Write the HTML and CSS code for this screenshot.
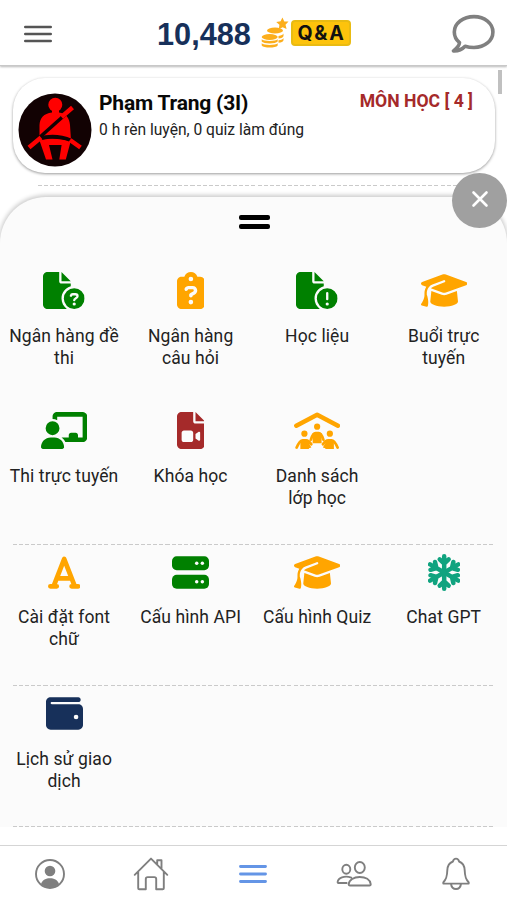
FILE: index.html
```html
<!DOCTYPE html>
<html lang="vi">
<head>
<meta charset="utf-8">
<title>Menu</title>
<link rel="stylesheet" href="styles.css">
</head>
<body>
<svg class="defs" aria-hidden="true">
  <symbol id="file-circle" viewBox="0 0 576 512"><path d="M0 64C0 28.700 28.700 0 64 0H224V128c0 17.700 14.300 32 32 32H384v38.600C310.100 219.500 256 287.400 256 368c0 59.100 29.100 111.300 73.700 143.300c-3.200.5-6.400.7-9.700.7H64c-35.300 0-64-28.700-64-64V64zM384 128H256V0L384 128zM432 224a144 144 0 1 1 0 288 144 144 0 1 1 0-288z"/></symbol>
  <symbol id="cap" viewBox="0 0 640 512"><path d="M320 32c-8.100 0-16.100 1.400-23.700 4.100L15.800 137.400C6.300 140.900 0 149.900 0 160s6.300 19.100 15.800 22.600l57.900 20.900C57.300 229.300 48 259.800 48 291.900v28.100c0 28.400-10.800 57.700-22.300 80.800c-6.500 13-13.900 25.800-22.500 37.600C0 442.700-.9 448.300.9 453.400s6 8.900 11.200 10.200l64 16c4.200 1.100 8.700.3 12.400-2s6.300-6.100 7.100-10.400c8.600-42.800 4.300-81.200-2.100-108.700C90.300 344.300 86 329.800 80 316.500V291.900c0-30.200 10.200-58.700 27.900-81.500c12.900-15.500 29.600-28 49.200-35.700l157-61.700c8.200-3.200 17.500.8 20.700 9s-.8 17.500-9 20.700l-157 61.700c-12.400 4.900-23.300 12.400-32.200 21.600l159.600 57.600c7.600 2.700 15.600 4.100 23.700 4.100s16.100-1.400 23.700-4.100L624.200 182.600c9.500-3.400 15.800-12.500 15.800-22.600s-6.300-19.100-15.800-22.600L343.700 36.100C336.100 33.400 328.100 32 320 32zM128 408c0 35.300 86 72 192 72s192-36.700 192-72L496.700 262.600 354.500 314c-11.100 4-22.800 6-34.500 6s-23.500-2-34.500-6L143.300 262.600 128 408z"/></symbol>
</svg>

<header class="topbar">
  <svg class="burger" viewBox="0 0 28 18"><path d="M1.200 2h25.600M1.200 9h25.600M1.200 16h25.600"/></svg>
  <div class="score">
    <span class="points">10,488</span>
    <svg class="coins" viewBox="0 0 28 32">
      <path d="M21.400.5l1.900 3.900 4.200.2-3 3.100 1.100 4.200-4-1.700-3.800 2.100.6-4.500-3.200-2.900 4.400-.7z"/>
      <ellipse cx="14" cy="13.500" rx="8" ry="3"/>
      <path d="M17.500 19c3-.3 4.700-1.200 5-2.400v2.300c-.4 1.400-2 2.200-5 2.500zM17.500 23.300c3-.3 4.700-1.200 5-2.400v2.300c-.4 1.400-2 2.200-5 2.500z"/>
      <ellipse cx="8.700" cy="20" rx="8" ry="2.900"/>
      <path d="M.7 22.200c1.800 2.300 14.200 2.300 16 0v2.300c-1.800 2.500-14.200 2.500-16 0zM.7 26.200c1.800 2.300 14.200 2.300 16 0v2.300c-1.800 2.700-14.200 2.700-16 0z"/>
    </svg>
    <span class="qa">Q&amp;A</span>
  </div>
  <svg class="chat" viewBox="0 0 44 40"><path d="M23 2.600C12.200 2.600 3.300 9.300 3.300 18c0 4.200 2 8 5.200 10.700-.3 3.200-2.200 5.400-6 8.200 4.600.2 8.600-1.500 11.600-4.700 2.800.9 5.700 1.300 8.900 1.300 10.800 0 18.900-6.900 18.900-15.500S33.800 2.600 23 2.600z"/></svg>
</header>

<main>
  <section class="profile">
    <svg class="avatar" viewBox="0 0 74 74">
      <circle class="disc" cx="37" cy="37" r="36.500"/>
      <circle cx="37.300" cy="11.700" r="7"/>
      <path d="M34 17h7v2.500c7 1 10.500 5.500 11 12.500l1 15.500c-9-3.500-22-4-31.500-1.500V32c.5-7 4-11.500 12.500-12.500z"/>
      <path d="M21.500 47.500c9-2.800 22-2.500 31 1.500l-4.700 17.500h-6.500l2.300-14.500H31l3.500 14.500H28z"/>
      <path class="gap" d="M50 19L21.500 44.500"/>
      <path class="lap" d="M21 45.500c10-2.800 22-2.300 32.500 2"/>
      <path class="belt" d="M54.500 14.500L43.500 24M23 44.500L11 54.500M52 47l10.500 7.500"/>
    </svg>
    <div class="who">
      <h1>Phạm Trang (3I)</h1>
      <p>0 h rèn luyện, 0 quiz làm đúng</p>
    </div>
    <strong class="subjects">MÔN HỌC [ 4 ]</strong>
  </section>
  <hr class="rule short">
</main>
<i class="scrollbar"></i>

<section class="sheet">
  <div class="handle"><i></i><i></i></div>
  <button class="close" aria-label="Đóng"><svg viewBox="0 0 18 18"><path d="M2.500 2.500l13 13M15.500 2.500l-13 13"/></svg></button>

  <div class="menu first">
    <a class="item green"><svg viewBox="0 0 576 512"><use href="#file-circle"/><path class="cut" d="M386 328c3-13 12-20 25-20h37c19 0 30 13 30 27 0 28-46 26-46 55"/><circle class="hole" cx="432" cy="443" r="22"/></svg><span>Ngân hàng đề<br>thi</span></a>
    <a class="item orange"><svg viewBox="0 0 384 512"><path fill-rule="evenodd" d="M192 0c-41.800 0-77.400 26.700-90.500 64H64C28.700 64 0 92.700 0 128V448c0 35.300 28.700 64 64 64H320c35.300 0 64-28.700 64-64V128c0-35.300-28.700-64-64-64H282.500C269.400 26.700 233.800 0 192 0zM192 64a32 32 0 1 1 0 64 32 32 0 1 1 0-64zM105.800 229.300c7.900-22.300 29.100-37.300 52.800-37.300h58.300c34.900 0 63.100 28.300 63.100 63.100c0 22.600-12.100 43.500-31.700 54.800L216 328.400c-.2 13-10.900 23.600-24 23.600c-13.300 0-24-10.700-24-24V314.500c0-8.600 4.600-16.500 12.100-20.800l44.300-25.400c4.700-2.700 7.600-7.700 7.600-13.100c0-8.400-6.800-15.100-15.100-15.100H158.600c-3.400 0-6.400 2.100-7.500 5.300l-.4 1.200c-4.400 12.500-18.200 19-30.600 14.600s-19-18.200-14.600-30.600zM160 416a32 32 0 1 1 64 0 32 32 0 1 1-64 0z"/></svg><span>Ngân hàng<br>câu hỏi</span></a>
    <a class="item green"><svg viewBox="0 0 576 512"><use href="#file-circle"/><path class="cut" d="M432 292v84"/><circle class="hole" cx="432" cy="443" r="22"/></svg><span>Học liệu</span></a>
    <a class="item orange"><svg viewBox="0 0 640 512"><use href="#cap"/></svg><span>Buổi trực<br>tuyến</span></a>
    <a class="item green"><svg viewBox="0 0 640 512"><path d="M160 64c0-35.300 28.700-64 64-64H576c35.300 0 64 28.700 64 64V352c0 35.300-28.700 64-64 64H336.800c-11.800-25.500-29.900-47.500-52.400-64H384V320c0-17.700 14.300-32 32-32h64c17.700 0 32 14.300 32 32v32h64V64H224v49.100C205.200 102.200 183.300 96 160 96V64zM160 128a96 96 0 1 1 0 192 96 96 0 1 1 0-192zM133.300 352h53.300C260.300 352 320 411.700 320 485.300c0 14.700-11.900 26.700-26.700 26.700H26.700C11.900 512 0 500.100 0 485.300C0 411.700 59.700 352 133.300 352z"/></svg><span>Thi trực tuyến</span></a>
    <a class="item red"><svg viewBox="0 0 384 512"><path fill-rule="evenodd" d="M64 0C28.700 0 0 28.700 0 64V448c0 35.300 28.700 64 64 64H320c35.300 0 64-28.700 64-64V160H256c-17.700 0-32-14.300-32-32V0H64zM256 0V128H384L256 0zM64 288c0-17.700 14.300-32 32-32h96c17.700 0 32 14.300 32 32v96c0 17.700-14.300 32-32 32H96c-17.700 0-32-14.300-32-32V288zM300.900 397.900L256 368V304l44.900-29.900c2-1.300 4.400-2.100 6.800-2.100c6.800 0 12.300 5.500 12.300 12.300V387.700c0 6.800-5.500 12.300-12.300 12.300c-2.400 0-4.800-.7-6.800-2.100z"/></svg><span>Khóa học</span></a>
    <a class="item orange"><svg viewBox="0 0 640 512"><path class="line" stroke-width="62" d="M32 190L320 37l288 153"/><circle cx="320" cy="203" r="43"/><circle cx="144" cy="300" r="43"/><circle cx="496" cy="300" r="43"/><path class="line" stroke-width="38" d="M234 382c14-50 30-91 64-91h44c34 0 50 41 64 91M37 492c24-58 50-101 84-101h46c30 0 50 20 72 55M603 492c-24-58-50-101-84-101h-46c-30 0-50 20-72 55"/><path d="M258 290h124v142H258zM88 400h118v112H88zM434 400h118v112H434zM206 430l34 60-34 10zM434 430l-34 60 34 10z"/></svg><span>Danh sách<br>lớp học</span></a>
  </div>
  <hr class="rule">
  <div class="menu">
    <a class="item orange"><svg viewBox="0 0 448 512"><path class="line" stroke-width="66" d="M33 447h88M327 447h88M80 442L224 70l144 372M125 338h198"/></svg><span>Cài đặt font<br>chữ</span></a>
    <a class="item green"><svg viewBox="0 0 512 512"><rect y="32" width="512" height="192" rx="64"/><rect y="288" width="512" height="192" rx="64"/><g class="hole"><circle cx="342" cy="128" r="24"/><circle cx="420" cy="128" r="24"/><circle cx="342" cy="384" r="24"/><circle cx="420" cy="384" r="24"/></g></svg><span>Cấu hình API</span></a>
    <a class="item orange"><svg viewBox="0 0 640 512"><use href="#cap"/></svg><span>Cấu hình Quiz</span></a>
    <a class="item teal"><svg viewBox="0 0 448 512"><path id="spoke" class="line" stroke-width="62" d="M224 256V31M162 74l62 58 62-58"/><use href="#spoke" transform="rotate(60 224 256)"/><use href="#spoke" transform="rotate(120 224 256)"/><use href="#spoke" transform="rotate(180 224 256)"/><use href="#spoke" transform="rotate(240 224 256)"/><use href="#spoke" transform="rotate(300 224 256)"/></svg><span>Chat GPT</span></a>
  </div>
  <hr class="rule">
  <div class="menu last">
    <a class="item navy"><svg viewBox="0 0 512 512"><path fill-rule="evenodd" d="M64 32C28.700 32 0 60.700 0 96V416c0 35.300 28.700 64 64 64H448c35.300 0 64-28.700 64-64V192c0-35.300-28.700-64-64-64H80c-8.800 0-16-7.200-16-16s7.200-16 16-16H448c17.700 0 32-14.300 32-32s-14.300-32-32-32H64zM416 272a32 32 0 1 1 0 64 32 32 0 1 1 0-64z"/></svg><span>Lịch sử giao<br>dịch</span></a>
  </div>
  <hr class="rule">
</section>

<nav class="tabs">
  <a><svg viewBox="0 0 36 36"><circle cx="18" cy="18" r="14"/><circle class="solid" cx="18" cy="15" r="5.300"/><path class="solid" d="M9 28c1.500-4.200 5-5.800 9-5.800s7.500 1.600 9 5.800c-5 5-13 5-18 0z"/></svg></a>
  <a><svg viewBox="0 0 36 36"><path d="M1.700 18.800L18 2.600l16.300 16.200M5.200 16v16.200q0 1.100 1.100 1.100h6.500V23q0-1.900 1.900-1.900h6.600q1.900 0 1.900 1.900v10.300h6.500q1.100 0 1.100-1.100V16M24.200 8.200V4.200h4.300v8.600"/></svg></a>
  <a class="active"><svg viewBox="0 0 36 36"><path d="M5.500 10.500h25M5.500 18h25M5.500 25.500h25"/></svg></a>
  <a><svg viewBox="0 0 36 36"><ellipse cx="23.800" cy="11.500" rx="5" ry="5.500"/><ellipse cx="10.300" cy="13.200" rx="4" ry="4.500"/><path d="M14 29.500h19.400q1.500 0 1.300-1.400c-.6-4.400-5-7.100-11-7.100s-10.500 2.800-11 7.100q-.1 1.400 1.300 1.400zM15.300 21.600C8.500 19 1.800 22 1.600 26.200q0 .8.800.8h8.200"/></svg></a>
  <a><svg viewBox="0 0 36 36"><path d="M5.300 27.600v-1.200c3-3.200 3.800-5.500 4-12 .2-5.200 2-7.600 5.600-8.900.5-2 1.600-2.900 3.100-2.900s2.600.9 3.100 2.900c3.600 1.300 5.400 3.700 5.600 8.900.2 6.500 1 8.800 4 12v1.200zM13 28c.5 3.300 2.500 5 5 5s4.500-1.700 5-5"/></svg></a>
</nav>
</body>
</html>
```

FILE: styles.css
```css
* { box-sizing: border-box; }

body {
  margin: 0;
  width: 507px;
  height: 900px;
  display: flex;
  flex-direction: column;
  position: relative;
  overflow: hidden;
  background: #fff;
  color: #222;
  font-family: Roboto, "Liberation Sans", sans-serif;
}

.defs { position: absolute; width: 0; height: 0; }

.topbar {
  flex: none;
  height: 66px;
  display: flex;
  align-items: center;
  padding: 0 12px 0 24px;
  border-bottom: 1px solid #c8c8c8;
  box-shadow: 0 1px 2px rgba(0, 0, 0, .28);
}

.burger { width: 28px; height: 18px; margin-top: 2px; stroke: #555; stroke-width: 2.400; stroke-linecap: round; }

.score { display: flex; align-items: center; margin-left: 105px; }

.points { width: 94px; font: bold 30.700px/40px "Liberation Sans", sans-serif; color: #17305a; margin-top: 4px; }

.coins { width: 28px; height: 32px; margin: 0 2px 0 10px; fill: #fcae1c; }

.qa {
  width: 60px;
  height: 26px;
  margin-top: 1px;
  border: 2px solid #e9bb12;
  border-radius: 4px;
  background: #fdc30c;
  color: #111;
  font: bold 19.500px/22px Inter, sans-serif;
  letter-spacing: 1.800px;
  text-indent: 1px;
  text-align: center;
  white-space: nowrap;
}

.chat { width: 44px; height: 40px; margin: 2px 0 0 auto; fill: none; stroke: #808080; stroke-width: 3.600; stroke-linejoin: round; }

main { flex: none; height: 131px; padding: 12px 12px 0 13px; }

.profile {
  height: 95px;
  display: flex;
  padding: 14px 22px 0 5px;
  border-radius: 32px;
  background: #fff;
  box-shadow: 0 1px 3px rgba(0, 0, 0, .4);
}

.avatar { width: 74px; height: 74px; margin-top: 1px; fill: #f00; }
.avatar .disc { fill: #120203; }
.avatar .belt { fill: none; stroke: #f00; stroke-width: 4.500; }
.avatar .gap { fill: none; stroke: #120203; stroke-width: 3.500; }
.avatar .lap { fill: none; stroke: #120203; stroke-width: 3.500; }

.who { flex: 1; margin-left: 7px; }
.who h1 { margin: -2px 0 0; font-size: 21px; line-height: 26px; font-weight: bold; letter-spacing: -.2px; color: #080808; white-space: nowrap; }
.who p { margin: 4px 0 0; font-size: 15.600px; line-height: 20px; white-space: nowrap; }
.subjects { font-size: 17.600px; line-height: 20px; margin-top: -1px; color: #a52a2a; white-space: nowrap; }

.rule {
  width: 482px;
  height: 1px;
  margin: 0 0 0 13px;
  border: 0;
  background: repeating-linear-gradient(90deg, #cacaca 0 4px, transparent 4px 6.100px);
}
.rule.short { width: 430px; margin: 12px 0 0 25px; }

.scrollbar { position: absolute; top: 70px; right: 5px; width: 4px; height: 24px; background: #c0c0c0; }

.sheet {
  flex: none;
  position: relative;
  height: 630px;
  border-radius: 46px 46px 0 0;
  background: #fbfbfb;
  box-shadow: 0 -1px 4px 1px rgba(0, 0, 0, .2);
  clip-path: inset(-30px 0 0 0);
}

.handle { height: 75px; padding: 18px 0 0 2px; display: flex; flex-direction: column; align-items: center; gap: 4.500px; }
.handle i { width: 31px; height: 4.500px; border-radius: 2px; background: #000; }

.close {
  position: absolute;
  top: -24px;
  right: 0;
  width: 55px;
  height: 55px;
  padding: 0 0 3px 1px;
  border: 0;
  border-radius: 50%;
  background: #a0a0a0;
  display: flex;
  align-items: center;
  justify-content: center;
}
.close svg { width: 18px; height: 18px; stroke: #fff; stroke-width: 2.600; stroke-linecap: round; }

.menu {
  height: 140px;
  padding: 9px 0 0 .8px;
  display: grid;
  grid-template-columns: repeat(4, 1fr);
  grid-auto-rows: 140px;
}
.menu.first { height: 272px; padding-top: 0; }

.item { display: flex; flex-direction: column; align-items: center; fill: currentColor; }
.item svg { height: 37px; }
.item span {
  margin-top: 15px;
  color: #222;
  font-size: 17.500px;
  line-height: 22px;
  letter-spacing: .1px;
  text-align: center;
  white-space: nowrap;
}
.first .item span, .last .item span { margin-top: 16px; }
.green { color: green; }
.orange { color: orange; }
.red { color: #a52a2a; }
.teal { color: #10a37f; }
.navy { color: #17305a; }
.line { fill: none; stroke: currentColor; stroke-linecap: round; stroke-linejoin: round; }
.cut { fill: none; stroke: #fbfbfb; stroke-width: 32; stroke-linecap: round; }
.hole { fill: #fbfbfb; }

.tabs {
  flex: none;
  height: 55px;
  margin-top: 18px;
  padding: 2px 0 0;
  display: grid;
  grid-template-columns: 100px 102px 101px 101.500px 1fr;
  align-items: center;
  justify-items: center;
  border-top: 1px solid #d5d5d5;
}
.tabs a { display: flex; color: #7f7f7f; }
.tabs svg { width: 36px; height: 36px; fill: none; stroke: currentColor; stroke-width: 1.900; stroke-linecap: round; stroke-linejoin: round; }
.tabs .solid { fill: currentColor; stroke: none; }
.tabs .active { color: #6495e6; }
.active svg { stroke-width: 2.900; }
```
